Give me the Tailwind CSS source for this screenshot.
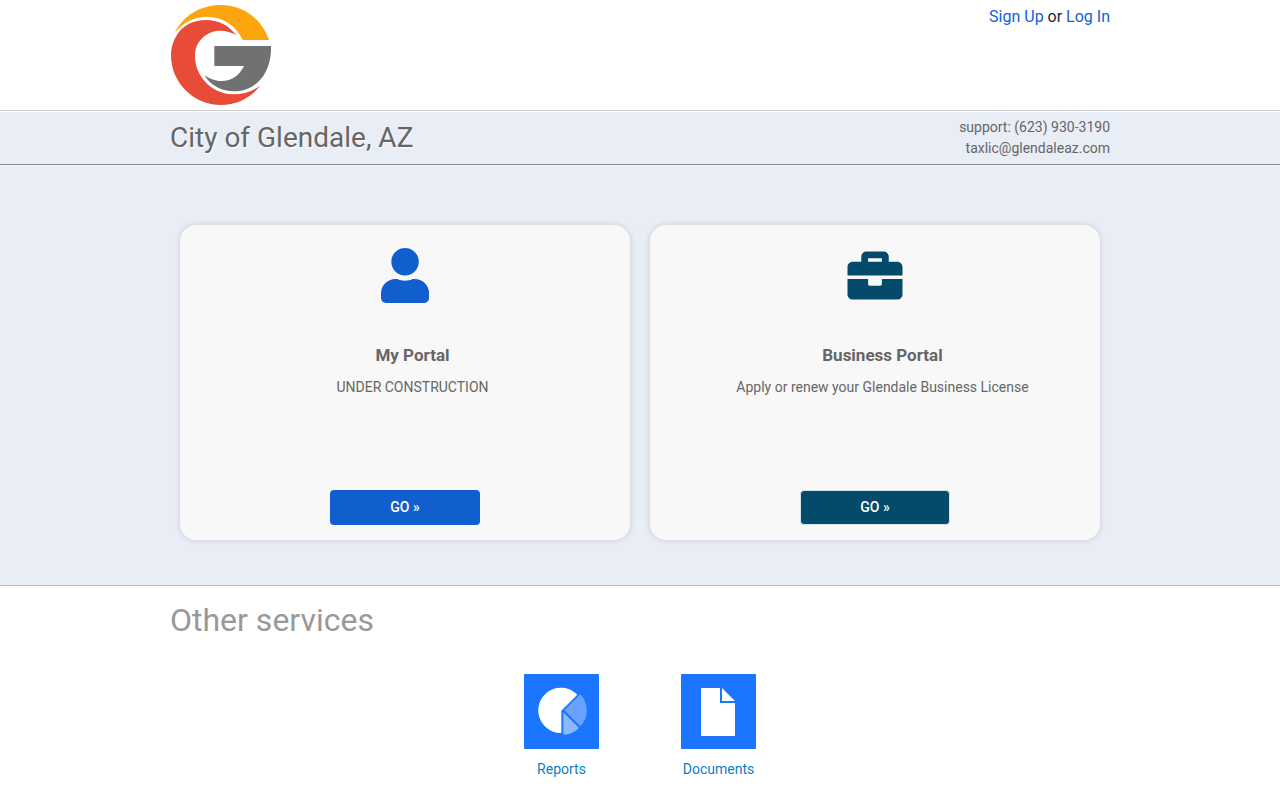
<!DOCTYPE html>
<html lang="en">
<head>
    <meta charset="UTF-8">
    <meta name="viewport" content="width=device-width, initial-scale=1.0">
    <title>City of Glendale, AZ</title>
    <script src="https://cdn.jsdelivr.net/npm/@tailwindcss/browser@4"></script>
</head>
<body class="bg-white font-[Roboto,sans-serif] text-sm text-[#666]">
    <!-- Header -->
    <header class="border-b border-[#ccc]">
        <div class="max-w-[940px] mx-auto flex justify-between items-start pt-[5px] pb-[5px]">
            <a href="#" aria-label="City of Glendale" class="ml-px">
                <svg class="w-[100px] h-[100px]" viewBox="33 15 300 300">
                    <path fill="#fda50f" d="M45 98C69 47 122 15 183 15C250 15 306 58 327 120H248C228 75 186 50 141 50C103 50 68 68 45 98Z"/>
                    <path fill="#e84c38" d="M228 105C206 75 173 60 138 60C101 60 72 75 54 100C41 119 33 142 33 165C33 248 100 315 183 315C231 315 274 293 300 257C277 275 247 284 216 283C153 279 105 228 105 167C105 124 139 92 181 92C199 92 214 97 228 105Z"/>
                    <path fill="#6f7271" d="M163 138H333C336 216 289 274 224 274C185 274 151 256 133 225C147 236 165 243 184 243C215 243 239 226 252 198H163Z"/>
                </svg>
            </a>
            <div class="text-base text-[#212529]">
                <a href="#" class="text-[#0f62d6]">Sign Up</a> or <a href="#" class="text-[#0f62d6]">Log In</a>
            </div>
        </div>
    </header>

    <!-- Title bar -->
    <div class="mt-px bg-[#e9edf5] border-b border-[#868b94]">
        <div class="max-w-[940px] mx-auto flex justify-between items-center h-[52px]">
            <h1 class="text-[28px] leading-[42px] text-shadow-[1px_1px_1px_#fff]">City of Glendale, AZ</h1>
            <div class="text-right leading-[21px]">
                support: (623) 930-3190<br>
                <a href="mailto:taxlic@glendaleaz.com">taxlic@glendaleaz.com</a>
            </div>
        </div>
    </div>

    <!-- Portals -->
    <main class="bg-[#e9edf5] border-t border-t-[#f4f6fa] border-b border-b-[#bbbdc2] pt-[59px] pb-[45px]">
        <div class="max-w-[940px] mx-auto px-[10px] grid grid-cols-2 gap-5">
            <section class="flex flex-col items-center h-[315px] rounded-[16px] bg-[#f8f8f8] shadow-[0_0_6px_rgba(0,0,0,0.15)] pt-[23px] pb-[15px]">
                <svg class="h-[55px]" viewBox="0 0 448 512" fill="#115fcf">
                    <path d="M224 256c70.7 0 128-57.3 128-128S294.7 0 224 0 96 57.3 96 128s57.3 128 128 128zm89.6 32h-16.7c-22.2 10.2-46.9 16-72.9 16s-50.6-5.8-72.9-16h-16.7C60.2 288 0 348.2 0 422.4V464c0 26.5 21.5 48 48 48h352c26.5 0 48-21.5 48-48v-41.6c0-74.2-60.2-134.4-134.4-134.4z"/>
                </svg>
                <div class="pl-[15px] pt-10 text-center">
                    <h2 class="text-[17px] leading-6 font-bold">My Portal</h2>
                    <p class="mt-[10px]">UNDER CONSTRUCTION</p>
                </div>
                <button type="button" class="mt-auto w-[150px] h-[35px] pb-px rounded-[4px] bg-[#115fcf] text-white font-medium">GO »</button>
            </section>
            <section class="flex flex-col items-center h-[315px] rounded-[16px] bg-[#f8f8f8] shadow-[0_0_6px_rgba(0,0,0,0.15)] pt-[23px] pb-[15px]">
                <svg class="h-[55px] w-14" viewBox="0 0 512 512" fill="#044a6b">
                    <path d="M320 336c0 8.84-7.16 16-16 16h-96c-8.84 0-16-7.16-16-16v-48H0v144c0 25.6 22.4 48 48 48h416c25.6 0 48-22.4 48-48V288H320v48zm144-208h-80V80c0-25.6-22.4-48-48-48H176c-25.6 0-48 22.4-48 48v48H48c-25.6 0-48 22.4-48 48v80h512v-80c0-25.6-22.4-48-48-48zm-144 0H192V96h128v32z"/>
                </svg>
                <div class="pl-[15px] pt-10 text-center">
                    <h2 class="text-[17px] leading-6 font-bold">Business Portal</h2>
                    <p class="mt-[10px]">Apply or renew your Glendale Business License</p>
                </div>
                <button type="button" class="mt-auto w-[150px] h-[35px] pb-px rounded-[4px] border border-[#d5e3ea] bg-[#044a6b] text-white font-medium">GO »</button>
            </section>
        </div>
    </main>

    <!-- Other services -->
    <section class="max-w-[940px] mx-auto pt-[10px]">
        <h2 class="text-[32px] leading-[48px] text-[#999]">Other services</h2>
        <div class="mt-[30px] flex justify-center gap-[82px] text-center text-[#0a7fc4]">
            <a href="#" class="w-[75px]">
                <svg class="w-[75px] h-[75px]" viewBox="0 0 225 225">
                    <rect width="225" height="225" rx="3" fill="#1a75ff"/>
                    <path fill="#fff" d="M112 110V177A68 68 0 1 1 160 62Z"/>
                    <path fill="#69a3ff" d="M121 109L169 61A69 69 0 0 1 169 157Z"/>
                    <path fill="#8bb8ff" d="M118 115L165 162A67 67 0 0 1 118 182Z"/>
                </svg>
                <span class="block mt-[10px]">Reports</span>
            </a>
            <a href="#" class="w-[75px]">
                <svg class="w-[75px] h-[75px]" viewBox="0 0 225 225">
                    <rect width="225" height="225" rx="3" fill="#1a75ff"/>
                    <path fill="#fff" d="M60 42H117V87H162V186H60ZM123 42L162 81H123Z"/>
                </svg>
                <span class="block mt-[10px]">Documents</span>
            </a>
        </div>
    </section>
</body>
</html>
